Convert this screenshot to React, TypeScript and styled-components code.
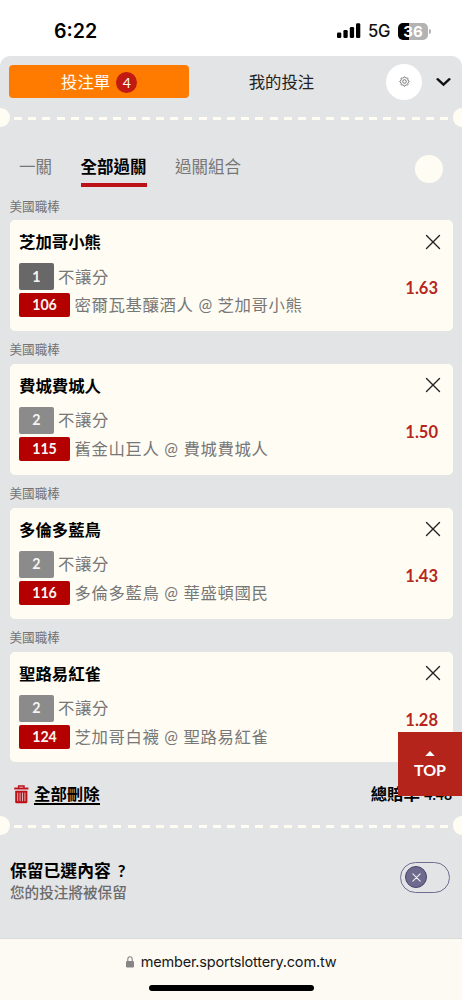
import React from "react";
import styled, { createGlobalStyle } from "styled-components";

const GlobalStyle = createGlobalStyle`
  * { box-sizing: border-box; }
  body { margin: 0; background: #fff; }
  button { border: 0; padding: 0; margin: 0; background: none; font: inherit; color: inherit; }
`;

const Screen = styled.div`
  position: relative;
  width: 462px;
  height: 1000px;
  overflow: hidden;
  display: flex;
  flex-direction: column;
  background: #fff;
  color: #111;
  font-family: Lato, "Noto Sans CJK TC", sans-serif;
`;

const StatusBar = styled.header`
  height: 56px;
  flex: none;
  display: flex;
  align-items: center;
  justify-content: space-between;
  padding: 6px 31px 0 54px;
  font-family: Inter, sans-serif;
`;

const Clock = styled.span`
  font-size: 19.6px;
  font-weight: 600;
  line-height: 24px;
  color: #000;
`;

const StatusIcons = styled.div`
  display: flex;
  align-items: center;
`;

const Network = styled.span`
  width: 23px;
  margin: 0 7px 0 7px;
  font-size: 16.6px;
  font-weight: 500;
  line-height: 20px;
  letter-spacing: -0.3px;
  white-space: nowrap;
`;

const Battery = styled.div`
  width: 30px;
  height: 17px;
  border-radius: 5px;
  background: linear-gradient(90deg, #000 36%, #b3b3b3 36%);
  color: #fff;
  font-size: 15px;
  font-weight: 700;
  line-height: 17px;
  text-align: center;
`;

const BatteryTip = styled.i`
  width: 2px;
  height: 5px;
  margin-left: 1px;
  border-radius: 0 2px 2px 0;
  background: #b3b3b3;
`;

const Sheet = styled.main`
  height: 882px;
  flex: none;
  display: flex;
  flex-direction: column;
  border-radius: 10px 10px 0 0;
  background: #e3e4e6;
`;

const SlipHeader = styled.nav`
  height: 52px;
  flex: none;
  display: flex;
  align-items: center;
  padding: 0 10px 1px 9.4px;
`;

const SlipTab = styled.button<{ $active?: boolean }>`
  width: ${(p) => (p.$active ? 179.6 : 185)}px;
  height: 33px;
  display: flex;
  align-items: center;
  justify-content: center;
  gap: 6px;
  padding-top: 1px;
  border-radius: 4px;
  background: ${(p) => (p.$active ? "#ff7b00" : "transparent")};
  color: ${(p) => (p.$active ? "#fffdf5" : "#222")};
  font-size: 16.4px;
  line-height: 24px;
`;

const Count = styled.span`
  width: 21px;
  height: 21px;
  border-radius: 50%;
  background: #c01a12;
  font-size: 14px;
  line-height: 22px;
  text-align: center;
`;

const SettingsButton = styled.button`
  width: 36px;
  height: 36px;
  margin-left: 12.5px;
  display: grid;
  place-items: center;
  border-radius: 50%;
  background: #fff;
`;

const CollapseButton = styled.button`
  margin-left: 14px;
  padding-top: 1px;
  display: grid;
`;

const Tear = styled.div`
  height: 19px;
  flex: none;
  display: flex;
  align-items: center;
  justify-content: space-between;
`;

const Notch = styled.i<{ $right?: boolean }>`
  width: 9.5px;
  height: 19px;
  border-radius: ${(p) => (p.$right ? "10px 0 0 10px" : "0 10px 10px 0")};
  background: #fffdf3;
`;

const Dashes = styled.i`
  width: 434px;
  height: 3px;
  margin-top: 1px;
  background: repeating-linear-gradient(90deg, #fffdf3 0 8px, transparent 8px 14.2px);
`;

const ParlayTabs = styled.div`
  height: 60.2px;
  flex: none;
  display: flex;
  align-items: flex-start;
  padding: 26px 19px 0 19px;
`;

const ParlayTab = styled.button<{ $active?: boolean }>`
  height: 34px;
  margin-right: 28.5px;
  border-bottom: 4px solid ${(p) => (p.$active ? "#bd111a" : "transparent")};
  color: ${(p) => (p.$active ? "#000" : "#777")};
  font-size: 16.5px;
  font-weight: ${(p) => (p.$active ? 700 : 400)};
  line-height: 28px;
  padding-bottom: 2px;
  white-space: nowrap;
`;

const RoundButton = styled.button`
  width: 28px;
  height: 28px;
  margin: 2px 0 0 auto;
  border-radius: 50%;
  background: #fffdf3;
`;

const BetList = styled.div`
  flex: none;
`;

const Bet = styled.section`
  height: 143.8px;
`;

const League = styled.h3`
  height: 33px;
  margin: 0;
  padding: 9.4px 9.5px 0;
  color: #737373;
  font-size: 12.6px;
  font-weight: 400;
  line-height: 20px;
`;

const Card = styled.article`
  height: 110.8px;
  margin: 0 9.5px;
  padding: 9px 12px 0 9.5px;
  display: flex;
  justify-content: space-between;
  border-radius: 5px;
  background: #fffdf3;
`;

const BetInfo = styled.div`
  display: flex;
  flex-direction: column;
`;

const Pick = styled.h2`
  margin: 0 0 8px;
  color: #000;
  font-size: 16.4px;
  font-weight: 700;
  line-height: 26px;
`;

const Line = styled.div<{ $tall?: boolean }>`
  height: ${(p) => (p.$tall ? 27 : 24)}px;
  margin-bottom: 3px;
  display: flex;
  align-items: center;
  gap: 4.5px;
  color: #777;
  font-size: 16.4px;
  letter-spacing: 0.62px;
  line-height: 24px;
  white-space: nowrap;
`;

const Tag = styled.b<{ $kind: "home" | "away" | "code" }>`
  width: ${(p) => (p.$kind === "code" ? 51 : 34.5)}px;
  height: 100%;
  display: flex;
  align-items: center;
  justify-content: center;
  border-radius: 2px;
  background: ${(p) => ({ home: "#686868", away: "#8b8b8b", code: "#b50000" })[p.$kind]};
  color: #f6f5f2;
  font-size: 14.2px;
  letter-spacing: 0;
`;

const BetSide = styled.div`
  display: flex;
  flex-direction: column;
  align-items: flex-end;
  padding-top: 4.5px;
`;

const RemoveButton = styled.button`
  display: grid;
`;

const Odds = styled.strong`
  margin: 25.5px 2.5px 0 0;
  color: #b8251d;
  font-size: 16.5px;
  line-height: 26px;
`;

const Summary = styled.div`
  height: 53.8px;
  flex: none;
  display: flex;
  align-items: center;
  justify-content: space-between;
  padding: 9.5px 10px 0 14px;
  color: #000;
  font-size: 16.4px;
  font-weight: 700;
`;

const DeleteAll = styled.button`
  display: flex;
  align-items: center;
  gap: 5px;
  line-height: 26px;
  span { border-bottom: 2px solid #000; line-height: 19px; }
`;

const Total = styled.div`
  display: flex;
  align-items: baseline;
  gap: 4.5px;
  line-height: 24px;
`;

const TotalOdds = styled.span`
  font-size: 14px;
`;

const KeepRow = styled.div`
  display: flex;
  align-items: center;
  justify-content: space-between;
  padding: 24px 12px 0 10px;
`;

const KeepTitle = styled.div`
  color: #000;
  font-size: 16.8px;
  font-weight: 700;
  line-height: 24px;
  word-spacing: 3px;
`;

const KeepNote = styled.div`
  color: #6b6b6b;
  font-size: 14.6px;
  font-weight: 500;
  line-height: 20px;
`;

const Toggle = styled.button`
  width: 50px;
  height: 31px;
  margin-top: -7.5px;
  padding-left: 4px;
  display: flex;
  align-items: center;
  border: 1.4px solid #706d91;
  border-radius: 16px;
`;

const Knob = styled.span`
  width: 22px;
  height: 22px;
  display: grid;
  place-items: center;
  border: 1.5px solid #47426f;
  border-radius: 50%;
  background: #6d6b8d;
`;

const BrowserBar = styled.footer`
  flex: 1;
  display: flex;
  flex-direction: column;
  align-items: center;
  border-top: 1px solid #dadad9;
  background: #fcfaf3;
  font-family: Inter, sans-serif;
`;

const Address = styled.div`
  height: 45px;
  display: flex;
  align-items: center;
  gap: 7px;
  color: #171717;
  font-size: 14.5px;
  letter-spacing: -0.19px;
`;

const HomeIndicator = styled.i`
  width: 165px;
  height: 6px;
  margin-top: 1px;
  border-radius: 3px;
  background: #000;
`;

const TopButton = styled.button`
  position: absolute;
  top: 732px;
  right: 0;
  width: 64px;
  height: 64px;
  display: flex;
  flex-direction: column;
  align-items: center;
  padding-top: 19px;
  background: #b5241b;
  color: #fff;
  font-size: 16px;
  font-weight: 700;
  line-height: 20px;
  svg { margin-bottom: 4px; }
`;

const bets = [
  { pick: "芝加哥小熊", side: 1, code: 106, game: "密爾瓦基釀酒人 @ 芝加哥小熊", odds: "1.63" },
  { pick: "費城費城人", side: 2, code: 115, game: "舊金山巨人 @ 費城費城人", odds: "1.50" },
  { pick: "多倫多藍鳥", side: 2, code: 116, game: "多倫多藍鳥 @ 華盛頓國民", odds: "1.43" },
  { pick: "聖路易紅雀", side: 2, code: 124, game: "芝加哥白襪 @ 聖路易紅雀", odds: "1.28" },
];

const Signal = () => (
  <svg width="24" height="16" viewBox="0 0 24 16">
    <rect x="0" y="9.5" width="4.3" height="5.5" rx="1.3" />
    <rect x="6.4" y="7" width="4.3" height="8" rx="1.3" />
    <rect x="12.8" y="4" width="4.3" height="11" rx="1.3" />
    <rect x="19" y="0.3" width="4.3" height="14.7" rx="1.3" />
  </svg>
);

const gearPath = Array.from({ length: 64 }, (_, i) => {
  const a = (i / 64) * Math.PI * 2;
  const r = 4.15 + 0.5 * Math.tanh(2.5 * Math.cos(8 * a));
  return `${i ? "L" : "M"}${(5.5 + r * Math.cos(a)).toFixed(2)} ${(5.5 + r * Math.sin(a)).toFixed(2)}`;
}).join("") + "Z";

const Gear = () => (
  <svg width="11" height="11" viewBox="0 0 11 11" fill="none" stroke="#555" strokeWidth="0.8">
    <path d={gearPath} />
    <circle cx="5.5" cy="5.5" r="1.8" />
  </svg>
);

const Cross = ({ size, color, weight }: { size: number; color: string; weight: number }) => (
  <svg width={size} height={size} viewBox="0 0 16 16" fill="none" stroke={color} strokeWidth={weight} strokeLinecap="round">
    <path d="M1.5 1.5l13 13M14.5 1.5l-13 13" />
  </svg>
);

const Trash = () => (
  <svg width="15" height="19" viewBox="0 0 15 19" fill="none" stroke="#bd111a">
    <path d="M0.2 3.5h14.2" strokeWidth="1.9" />
    <path d="M4.6 3V1h5.4v2" strokeWidth="1.4" />
    <path d="M1.2 5.7h12.2v11.2a1.4 1.4 0 0 1-1.4 1.4H2.6a1.4 1.4 0 0 1-1.4-1.4z" fill="#bd111a" stroke="none" />
    <path d="M3.7 7.6v8.6M6.1 7.6v8.6M8.5 7.6v8.6M10.9 7.6v8.6" stroke="#e6c3c4" strokeWidth="0.9" />
  </svg>
);

const Perforation = () => (
  <Tear>
    <Notch />
    <Dashes />
    <Notch $right />
  </Tear>
);

export default function App() {
  return (
    <Screen>
      <GlobalStyle />
      <StatusBar>
        <Clock>6:22</Clock>
        <StatusIcons>
          <Signal />
          <Network>5G</Network>
          <Battery>36</Battery>
          <BatteryTip />
        </StatusIcons>
      </StatusBar>
      <Sheet>
        <SlipHeader>
          <SlipTab $active>
            投注單<Count>4</Count>
          </SlipTab>
          <SlipTab>我的投注</SlipTab>
          <SettingsButton aria-label="設定"><Gear /></SettingsButton>
          <CollapseButton aria-label="收合">
            <svg width="15" height="10" viewBox="0 0 15 10" fill="none" stroke="#111" strokeWidth="2.4" strokeLinecap="round">
              <path d="M1.6 2.2l5.9 5.4 5.9-5.4" />
            </svg>
          </CollapseButton>
        </SlipHeader>
        <Perforation />
        <ParlayTabs>
          <ParlayTab>一關</ParlayTab>
          <ParlayTab $active>全部過關</ParlayTab>
          <ParlayTab>過關組合</ParlayTab>
          <RoundButton aria-label="更多" />
        </ParlayTabs>
        <BetList>
          {bets.map((bet) => (
            <Bet key={bet.code}>
              <League>美國職棒</League>
              <Card>
                <BetInfo>
                  <Pick>{bet.pick}</Pick>
                  <Line $tall>
                    <Tag $kind={bet.side === 1 ? "home" : "away"}>{bet.side}</Tag>不讓分
                  </Line>
                  <Line>
                    <Tag $kind="code">{bet.code}</Tag>{bet.game}
                  </Line>
                </BetInfo>
                <BetSide>
                  <RemoveButton aria-label="刪除"><Cross size={16} color="#222" weight={1.4} /></RemoveButton>
                  <Odds>{bet.odds}</Odds>
                </BetSide>
              </Card>
            </Bet>
          ))}
        </BetList>
        <Summary>
          <DeleteAll><Trash /><span>全部刪除</span></DeleteAll>
          <Total>總賠率<TotalOdds>4.48</TotalOdds></Total>
        </Summary>
        <Perforation />
        <KeepRow>
          <div>
            <KeepTitle>保留已選內容 ?</KeepTitle>
            <KeepNote>您的投注將被保留</KeepNote>
          </div>
          <Toggle aria-label="保留">
            <Knob><Cross size={9} color="#f3f2f6" weight={1.9} /></Knob>
          </Toggle>
        </KeepRow>
      </Sheet>
      <BrowserBar>
        <Address>
          <svg width="8" height="12" viewBox="0 0 8 12">
            <rect x="0" y="5" width="8" height="6.5" rx="1.2" fill="#858585" />
            <path d="M1.8 5.5V3.2a2.2 2.4 0 0 1 4.4 0v2.3" fill="none" stroke="#858585" strokeWidth="1.1" />
          </svg>
          member.sportslottery.com.tw
        </Address>
        <HomeIndicator />
      </BrowserBar>
      <TopButton>
        <svg width="10" height="5" viewBox="0 0 10 5"><path d="M0.3 5L5 0l4.7 5z" fill="#fff" /></svg>
        TOP
      </TopButton>
    </Screen>
  );
}
